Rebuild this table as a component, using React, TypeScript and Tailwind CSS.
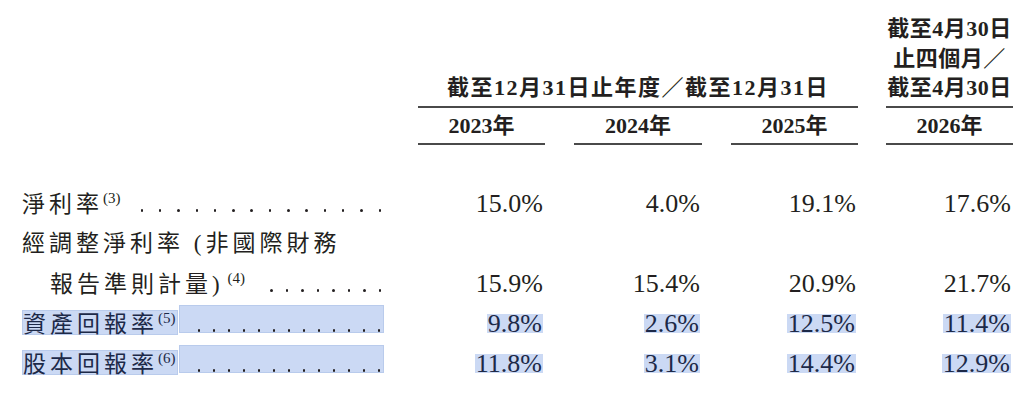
import React from 'react';

type Row = {
  label: React.ReactNode;
  note?: string;
  indent?: boolean;
  dots?: number;
  gap?: string;
  values?: string[];
  selected?: boolean;
};

const rows: Row[] = [
  { label: '淨利率', note: '(3)', dots: 14, gap: 'gap-[15.8px]', values: ['15.0%', '4.0%', '19.1%', '17.6%'] },
  { label: '經調整淨利率 (非國際財務' },
  { label: '報告準則計量)', note: ' (4)', indent: true, dots: 8, gap: 'gap-[13px]', values: ['15.9%', '15.4%', '20.9%', '21.7%'] },
  { label: '資產回報率', note: '(5)', dots: 13, gap: 'gap-[12.5px]', values: ['9.8%', '2.6%', '12.5%', '11.4%'], selected: true },
  { label: '股本回報率', note: '(6)', dots: 13, gap: 'gap-[12.5px]', values: ['11.8%', '3.1%', '14.4%', '12.9%'], selected: true },
];

// widths of the four figure columns and the gaps before them
const cols = [
  { w: 'w-[127px]', ml: 'ml-0' },
  { w: 'w-[128px]', ml: 'ml-[29px]' },
  { w: 'w-[127px]', ml: 'ml-[29px]' },
  { w: 'w-[127px]', ml: 'ml-[28px]' },
];

function Leader({ count, gap, selected }: { count: number; gap: string; selected?: boolean }) {
  return (
    <div className={`flex-1 flex justify-end ${selected ? 'ml-[1px]' : ''}`}>
      <div
        className={`flex items-end justify-end h-[28px] pr-[3px] ${
          selected ? 'w-full bg-[#cbd9f4] border border-[#b9cbec]' : ''
        }`}
      >
        <div className={`flex items-end ${gap}`}>
          {Array.from({ length: count }).map((_, i) => (
            <span key={i} className="block w-[2.5px] h-[2.5px] rounded-full bg-[#231f20]" />
          ))}
        </div>
      </div>
    </div>
  );
}

export default function App() {
  return (
    <div className="w-[1032px] h-[402px] overflow-hidden bg-white pl-[22px] text-[#231f20] font-['Liberation_Serif','Noto_Sans_CJK_TC',serif]">
      {/* Header */}
      <div className="flex items-end pt-[14px] font-bold text-[22px] leading-[29.5px]">
        <div className="w-[396px] shrink-0" />
        <div className="w-[440px] shrink-0 text-center pb-[3px] border-b-2 border-[#4a4a4a] tracking-[1.5px]">
          截至12月31日止年度／截至12月31日
        </div>
        <div className="w-[127px] ml-[28px] shrink-0 text-center pb-[3px] border-b-2 border-[#4a4a4a] tracking-[0.5px]">
          <div>截至4月30日</div>
          <div>止四個月／</div>
          <div>截至4月30日</div>
        </div>
      </div>
      <div className="flex font-bold text-[22px]">
        <div className="w-[396px] shrink-0" />
        {['2023年', '2024年', '2025年', '2026年'].map((y, i) => (
          <div
            key={y}
            className={`${cols[i].w} ${cols[i].ml} shrink-0 h-[37px] flex items-center justify-center border-b-2 border-[#4a4a4a]`}
          >
            {y}
          </div>
        ))}
      </div>

      {/* Body */}
      <div className="mt-[39px]">
        {rows.map((r, idx) => (
          <div key={idx} className="flex items-baseline h-[40px] leading-[40px] text-[26px]">
            <div className={`w-[362px] shrink-0 flex items-baseline ${r.indent ? 'pl-[28px]' : ''}`}>
              <span
                className={`text-[23px] tracking-[4px] whitespace-nowrap ${
                  r.selected
                    ? 'inline-block h-[25px] leading-[25px] bg-[#cbd9f4] border border-[#b9cbec] text-[#1c2948] pr-[1px]'
                    : ''
                }`}
              >
                {r.label}
                {r.note && (
                  <span className="text-[15px] leading-none tracking-normal align-[9px] whitespace-pre">{r.note}</span>
                )}
              </span>
              {r.dots && <Leader count={r.dots} gap={r.gap!} selected={r.selected} />}
            </div>
            {r.values && (
              <div className="flex ml-[34px]">
                {r.values.map((v, i) => (
                  <div key={i} className={`${cols[i].w} ${cols[i].ml} shrink-0 text-right pr-[2px]`}>
                    <span
                      className={
                        r.selected
                          ? 'inline-block h-[19px] leading-[19px] px-[1px] bg-[#cbd9f4] text-[#1c2948]'
                          : ''
                      }
                    >
                      {v}
                    </span>
                  </div>
                ))}
              </div>
            )}
          </div>
        ))}
      </div>
    </div>
  );
}
